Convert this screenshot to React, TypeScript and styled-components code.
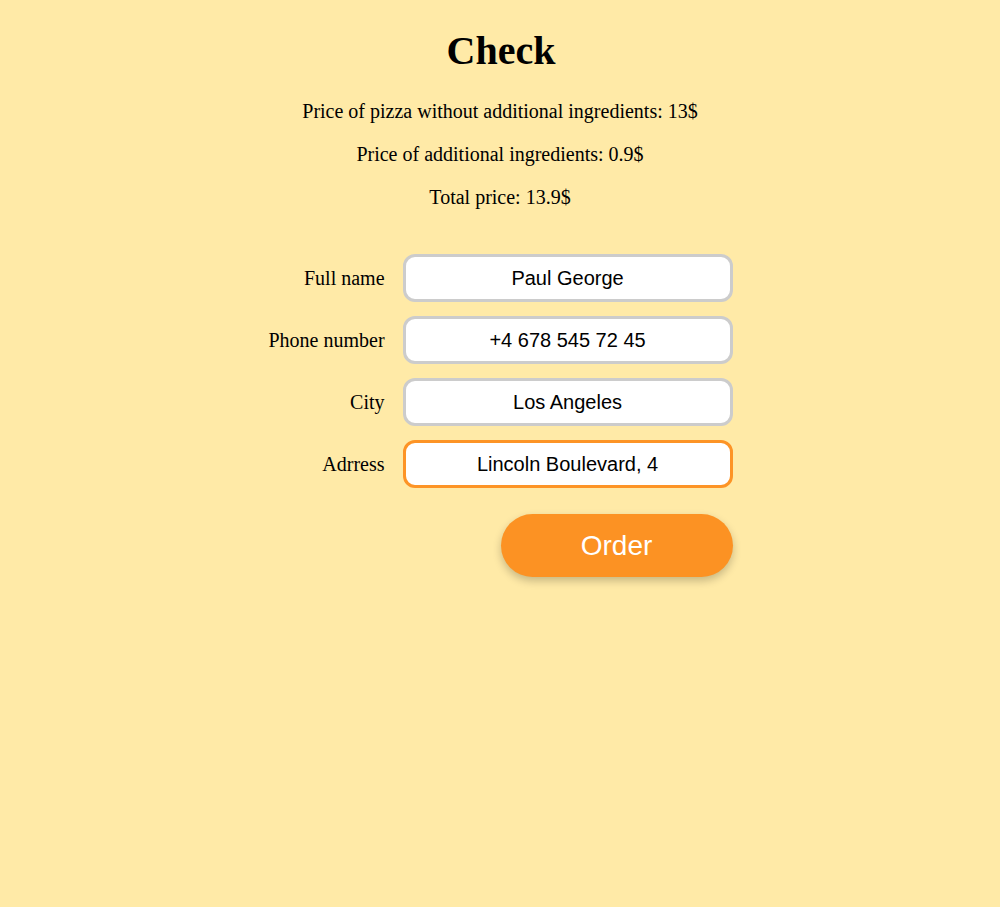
import styled, { createGlobalStyle } from 'styled-components';

const GlobalStyle = createGlobalStyle`
  html, body {
    margin: 0;
    padding: 0;
    background: #ffeaa7;
  }
  body {
    font-family: "Liberation Serif", "Times New Roman", serif;
    color: #000;
  }
`;

const fields = [
  { label: 'Full name', value: 'Paul George', active: false },
  { label: 'Phone number', value: '+4 678 545 72 45', active: false },
  { label: 'City', value: 'Los Angeles', active: false },
  { label: 'Adrress', value: 'Lincoln Boulevard, 4', active: true },
];

const App = () => {
  return (
    <Page>
      <GlobalStyle />
      <Title>Check</Title>
      <Summary>
        <Line>Price of pizza without additional ingredients: 13$</Line>
        <Line>Price of additional ingredients: 0.9$</Line>
        <Line>Total price: 13.9$</Line>
      </Summary>
      <Form onSubmit={(e) => e.preventDefault()}>
        {fields.map((f) => (
          <Row key={f.label}>
            <Label>{f.label}</Label>
            <Input defaultValue={f.value} $active={f.active} />
          </Row>
        ))}
        <Row>
          <span />
          <ButtonCell>
            <OrderButton type="submit">Order</OrderButton>
          </ButtonCell>
        </Row>
      </Form>
    </Page>
  );
};

export default App;

const Page = styled.main`
  min-height: 907px;
  display: flex;
  flex-direction: column;
  align-items: center;
  padding-top: 29px;
  box-sizing: border-box;
`;

const Title = styled.h1`
  margin: 0;
  font-size: 40px;
  line-height: 44px;
  font-weight: bold;
  padding-left: 2px;
`;

const Summary = styled.div`
  display: flex;
  flex-direction: column;
  align-items: center;
  gap: 20px;
  margin-top: 27px;
`;

const Line = styled.p`
  margin: 0;
  font-size: 20px;
  line-height: 23px;
`;

const Form = styled.form`
  display: grid;
  grid-template-columns: auto 330px;
  column-gap: 18px;
  row-gap: 14px;
  margin-top: 45px;
  margin-left: 1px;
`;

const Row = styled.div`
  display: contents;
`;

const Label = styled.label`
  align-self: center;
  text-align: right;
  font-size: 20px;
`;

const Input = styled.input<{ $active: boolean }>`
  box-sizing: border-box;
  width: 330px;
  height: 48px;
  border: 3px solid ${(p) => (p.$active ? '#fd9426' : '#cccccc')};
  border-radius: 12px;
  background: #fff;
  outline: none;
  text-align: center;
  font-family: "Liberation Sans", Arial, sans-serif;
  font-size: 20px;
  color: #000;
`;

const ButtonCell = styled.div`
  display: flex;
  justify-content: flex-end;
  padding-top: 12px;
`;

const OrderButton = styled.button`
  width: 232px;
  height: 63px;
  border: none;
  border-radius: 32px;
  background: #fc9223;
  color: #fff;
  font-family: "Liberation Sans", Arial, sans-serif;
  font-size: 28px;
  cursor: pointer;
  box-shadow: 0 4px 8px rgba(0, 0, 0, 0.22);
`;
